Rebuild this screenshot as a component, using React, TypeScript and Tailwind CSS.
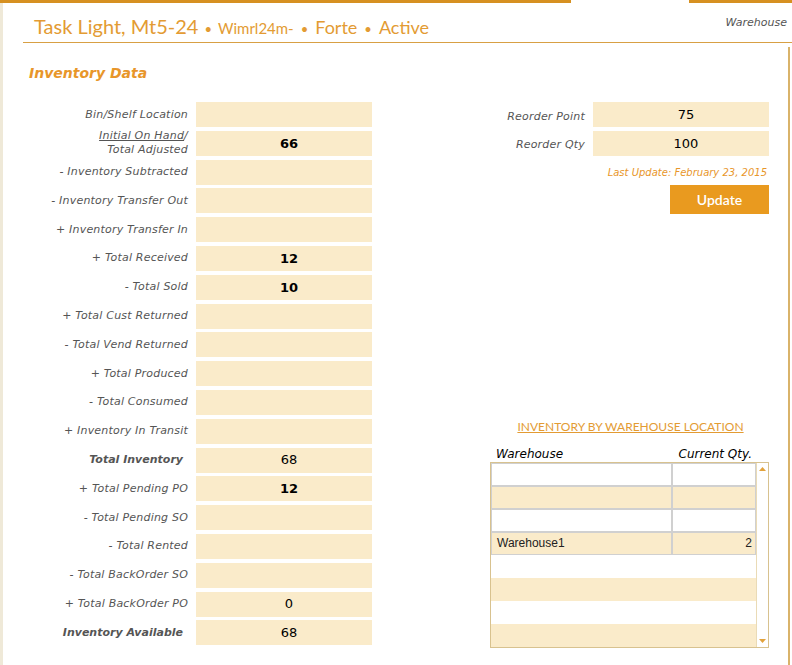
import { FC } from "react";

type Row = { label: string; value?: string; strong?: boolean; bold?: boolean; special?: boolean };

const rows: Row[] = [
  { label: "Bin/Shelf Location" },
  { label: "", value: "66", strong: true, special: true },
  { label: "- Inventory Subtracted" },
  { label: "- Inventory Transfer Out" },
  { label: "+ Inventory Transfer In" },
  { label: "+ Total Received", value: "12", strong: true },
  { label: "- Total Sold", value: "10", strong: true },
  { label: "+ Total Cust Returned" },
  { label: "- Total Vend Returned" },
  { label: "+ Total Produced" },
  { label: "- Total Consumed" },
  { label: "+ Inventory In Transit" },
  { label: "Total Inventory", value: "68", bold: true },
  { label: "+ Total Pending PO", value: "12", strong: true },
  { label: "- Total Pending SO" },
  { label: "- Total Rented" },
  { label: "- Total BackOrder SO" },
  { label: "+ Total BackOrder PO", value: "0" },
  { label: "Inventory Available", value: "68", bold: true },
];

const verdana = { fontFamily: '"DejaVu Sans", Verdana, sans-serif' };
const trebuchet = { fontFamily: 'Lato, "Open Sans", sans-serif' };
const arial = { fontFamily: '"Liberation Sans", Arial, sans-serif' };

const App: FC = () => {
  return (
    <div className="w-[792px] h-[665px] bg-white overflow-hidden flex flex-col">
      {/* top accent bar */}
      <div className="flex h-[3px] shrink-0">
        <div className="w-[571px] bg-[#d69021]" />
        <div className="w-[118px]" />
        <div className="flex-1 bg-[#d69021]" />
      </div>

      <div className="flex flex-1">
        <div className="w-[3px] bg-[#efe9d8]" />

        <div className="flex-1 flex flex-col">
          {/* Header */}
          <div className="ml-[20px] h-[40px] border-b border-[#d8a044] flex items-end justify-between pb-[3px]">
            <div className="flex items-baseline pl-[11px] text-[#e39b33]" style={trebuchet}>
              <span className="text-[20px] leading-none">Task Light, Mt5-24</span>
              <span className="text-[13px] mx-[6px]">•</span>
              <span className="text-[15px] leading-none">Wimrl24m-</span>
              <span className="text-[13px] mx-[7px]">•</span>
              <span className="text-[18px] leading-none">Forte</span>
              <span className="text-[13px] mx-[7px]">•</span>
              <span className="text-[18px] leading-none">Active</span>
            </div>
            <span className="text-[11px] italic text-[#555] pr-[5px] mb-[8px]" style={verdana}>
              Warehouse
            </span>
          </div>

          {/* Content */}
          <div className="mt-[4px] w-[787px] flex-1 border-r-2 border-[#d9b36a] flex">
            {/* Left column */}
            <div className="w-[369px] flex flex-col">
              <div
                className="pl-[26px] pt-[17px] h-[55px] text-[14px] leading-[18px] font-bold italic text-[#e8962a]"
                style={verdana}
              >
                Inventory Data
              </div>
              <div className="flex flex-col gap-[3.8px]">
                {rows.map((r, i) => (
                  <div key={i} className="flex items-center h-[25px]">
                    <div
                      className={`w-[185px] text-right text-[#555] italic leading-[14px] ${
                        r.bold ? "font-bold text-[11px] pr-[5px] text-[#444]" : "text-[11px] tracking-[0.2px]"
                      }`}
                      style={verdana}
                    >
                      {r.special ? (
                        <>
                          <span className="underline">Initial On Hand</span>/<br />
                          Total Adjusted
                        </>
                      ) : (
                        r.label
                      )}
                    </div>
                    <div
                      className={`ml-[8px] w-[176px] h-full bg-[#faebca] flex items-center justify-center pl-[10px] text-[13px] text-black ${
                        r.strong ? "font-bold" : ""
                      }`}
                      style={verdana}
                    >
                      {r.value}
                    </div>
                  </div>
                ))}
              </div>
            </div>

            {/* Right column */}
            <div className="ml-[118px] w-[279px] flex flex-col pt-[55px]">
              <div className="flex flex-col gap-[3.8px]">
                {[
                  ["Reorder Point", "75", "pt-[6px]"],
                  ["Reorder Qty", "100", "pt-[3px]"],
                ].map(([l, v, pad]) => (
                  <div key={l} className="flex items-center h-[25px]">
                    <div
                      className={`w-[95px] text-right text-[11px] tracking-[0.2px] italic text-[#555] whitespace-nowrap ${pad}`}
                      style={verdana}
                    >
                      {l}
                    </div>
                    <div
                      className="ml-[8px] w-[176px] h-full bg-[#faebca] flex items-center justify-center pl-[10px] text-[13px] text-black"
                      style={verdana}
                    >
                      {v}
                    </div>
                  </div>
                ))}
              </div>
              <div
                className="mt-[10px] text-right pr-[2px] text-[10px] italic text-[#e8962a] leading-[14px]"
                style={verdana}
              >
                Last Update: February 23, 2015
              </div>
              <div className="flex justify-end mt-[5px]">
                <button
                  className="w-[99px] h-[29px] bg-[#e99a1f] text-white text-[14px] font-semibold"
                  style={trebuchet}
                >
                  Update
                </button>
              </div>

              <div
                className="mt-[205px] text-center text-[12px] leading-[16px] text-[#e39b33] underline pl-[2px]"
                style={trebuchet}
              >
                INVENTORY BY WAREHOUSE LOCATION
              </div>
              <div
                className="mt-[11px] flex justify-between pl-[6px] pr-[17px] text-[12px] leading-[16px] italic text-black"
                style={verdana}
              >
                <span>Warehouse</span>
                <span>Current Qty.</span>
              </div>

              {/* Warehouse table */}
              <div className="h-[186px] border border-[#d8c28f] flex">
                <div className="flex-1 flex flex-col">
                  {[0, 1, 2, 3].map((i) => (
                    <div key={i} className={`flex h-[23px] ${i % 2 ? "bg-[#faebca]" : "bg-white"}`}>
                      <div
                        className="w-[181px] border-[1.5px] border-[#d0d0d0] flex items-center pl-[5px] text-[12px] text-[#222]"
                        style={arial}
                      >
                        {i === 3 ? "Warehouse1" : ""}
                      </div>
                      <div
                        className="flex-1 border-[1.5px] border-[#d0d0d0] flex items-center justify-end pr-[3px] text-[12px] text-[#222]"
                        style={arial}
                      >
                        {i === 3 ? "2" : ""}
                      </div>
                    </div>
                  ))}
                  {[0, 1, 2, 3].map((i) => (
                    <div key={i} className={`h-[23px] ${i % 2 ? "bg-[#faebca]" : "bg-white"}`} />
                  ))}
                </div>
                <div className="w-[12px] border-l border-[#eadbb6] bg-white flex flex-col justify-between items-center py-[4px]">
                  <svg width="7" height="4" viewBox="0 0 7 4">
                    <path d="M0 4 L3.5 0 L7 4 Z" fill="#e2a23c" />
                  </svg>
                  <svg width="7" height="4" viewBox="0 0 7 4">
                    <path d="M0 0 L3.5 4 L7 0 Z" fill="#e2a23c" />
                  </svg>
                </div>
              </div>
            </div>
          </div>
        </div>
      </div>
    </div>
  );
};

export default App;
